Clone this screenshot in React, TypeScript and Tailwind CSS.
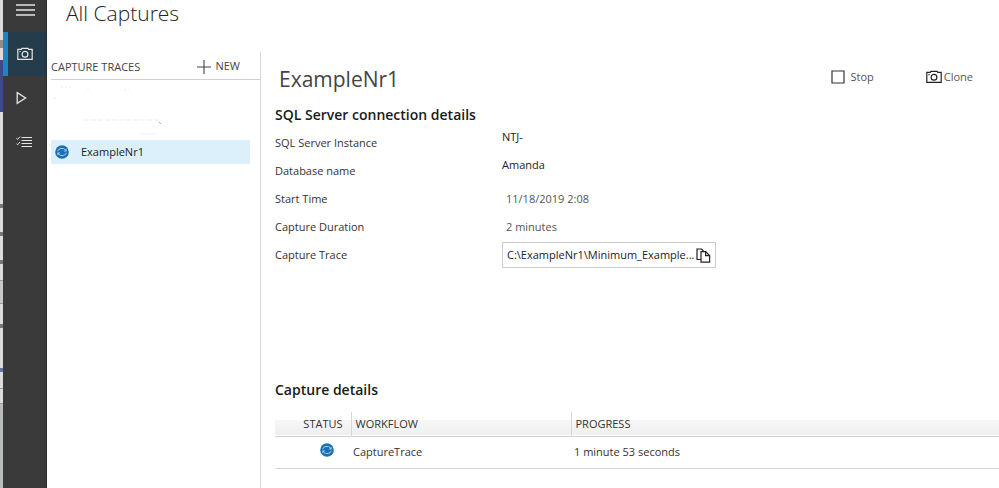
import React from "react";

const CameraIcon = ({ className }: { className?: string }) => (
  <svg viewBox="0 0 16 14" className={className} fill="none" stroke="currentColor" strokeWidth="1.2" aria-hidden="true">
    <path d="M0.8 2.4H4.2L5 1.3H11L11.8 2.4H15.2V12.4H0.8Z" />
    <circle cx="8" cy="7.3" r="2.9" />
    <path d="M2.4 4.6H3.6" />
  </svg>
);

const SyncIcon = ({ className }: { className?: string }) => (
  <svg viewBox="0 0 14 14" className={className} fill="none" aria-hidden="true">
    <circle cx="7" cy="7" r="6.8" fill="#1b6fb3" />
    <g stroke="#a3cdea" strokeWidth="1">
      <path d="M2.6 6.2A4.5 3.9 0 0 1 10.4 4.8" />
      <path d="M11.4 7.8A4.5 3.9 0 0 1 3.6 9.2" />
    </g>
    <path d="M11.6 3.6V6.4H8.6Z" fill="#a3cdea" />
    <path d="M2.4 10.4V7.6H5.4Z" fill="#a3cdea" />
  </svg>
);

const details = [
  { label: "SQL Server Instance", value: "NTJ-", style: "pb-3 text-[#222]" },
  { label: "Database name", value: "Amanda", style: "pb-3 text-[#222]" },
  { label: "Start Time", value: "11/18/2019 2:08", style: "pl-1 text-[#555]" },
  { label: "Capture Duration", value: "2 minutes", style: "pl-1 text-[#555]" },
];

// Sliver of the window behind this one
const BackgroundEdge = () => (
  <div className="flex w-[3px] shrink-0 flex-col bg-[#dcdcdc]" aria-hidden="true">
    <div className="h-10" />
    <div className="h-2 bg-[#8a8f94]" />
    <div className="h-3" />
    <div className="h-[52px] bg-[#3c4a8c]" />
    <div className="h-[92px]" />
    <div className="h-1 bg-[#777]" />
    <div className="h-6" />
    <div className="h-1 bg-[#777]" />
    <div className="h-6" />
    <div className="h-1 bg-[#777]" />
    <div className="h-4" />
    <div className="h-6 border-y border-[#999] bg-[#c8c8c8]" />
    <div className="h-5" />
    <div className="h-1 bg-[#777]" />
    <div className="h-10" />
    <div className="h-1 bg-[#6b76a0]" />
    <div className="h-4" />
    <div className="h-4 border-y border-[#999]" />
    <div className="grow bg-[#b9bcbc]" />
  </div>
);

const Sidebar = () => (
  <nav className="flex w-11 shrink-0 flex-col border-r border-[#2b2b2b] bg-[#3a3a3a] text-[#e4e4e4]">
    <button aria-label="Menu" className="h-8 pl-[13px]">
      <svg viewBox="0 0 19 12" className="mb-3 h-3 w-[19px]" stroke="currentColor" strokeWidth="1.4" aria-hidden="true">
        <path d="M0 1H19M0 6H19M0 11H19" />
      </svg>
    </button>
    <button aria-label="Captures" className="h-11 border-l-[5px] border-[#1f84c6] bg-[#243c4c] pl-[9px]">
      <CameraIcon className="h-[14px] w-4" />
    </button>
    <button aria-label="Replays" className="h-11 pl-[13px]">
      <svg viewBox="0 0 11 14" className="h-[14px] w-[11px]" fill="none" stroke="currentColor" strokeWidth="1.3" aria-hidden="true">
        <path d="M1.2 1.6L9.6 7L1.2 12.4Z" />
      </svg>
    </button>
    <button aria-label="Analysis reports" className="h-11 pl-[13px]">
      <svg viewBox="0 0 16 12" className="h-3 w-4" fill="none" stroke="currentColor" aria-hidden="true">
        <path d="M5.5 1.5H16M5.5 4.5H16M5.5 7.5H16M5.5 10.5H16" strokeWidth="1.1" />
        <path d="M0.4 2.2L1.6 3.4L4 0.6M0.4 7.6L1.6 8.8L4 6" strokeWidth="1" />
      </svg>
    </button>
  </nav>
);

const TraceList = () => (
  <aside className="w-[214px] shrink-0 border-r border-[#d8d8d8] pl-1">
    <div className="flex h-7 items-center justify-between border-b border-[#d0d0d0] pr-5 text-[11px] text-[#444]">
      <h2 className="pt-1">CAPTURE TRACES</h2>
      <button className="flex items-center gap-1 pt-[2px]">
        <svg viewBox="0 0 14 14" className="size-[14px]" stroke="currentColor" strokeWidth="1.1" aria-hidden="true">
          <path d="M7 0V14M0 7H14" />
        </svg>
        NEW
      </button>
    </div>
    <svg viewBox="0 0 200 60" className="h-[60px] w-[200px]" fill="none" stroke="#ececec" aria-hidden="true">
      <path d="M10 7H20M3 18H8M36 10H38M73 10H78" strokeDasharray="2 2" />
      <path d="M33 40H108" strokeDasharray="5 2" />
      <path d="M108 42L110 44" stroke="#aaa" />
      <path d="M90 54H104" stroke="#f3f3f3" />
    </svg>
    <div className="pr-[10px]">
      <button className="flex h-6 w-full items-center gap-3 bg-[#dbf0fa] pl-1 text-[11px] text-[#222]">
        <SyncIcon className="size-[14px]" />
        ExampleNr1
      </button>
    </div>
  </aside>
);

const ConnectionDetails = () => (
  <section>
    <h3 className="text-sm font-semibold text-[#1a1a1a]">SQL Server connection details</h3>
    <dl className="mt-1 text-[11px] text-[#333]">
      {details.map((item) => (
        <div key={item.label} className="flex h-7 items-center">
          <dt className="w-[227px] shrink-0">{item.label}</dt>
          <dd className={item.style}>{item.value}</dd>
        </div>
      ))}
    </dl>
    <div className="flex h-7 items-center text-[11px] text-[#333]">
      <label htmlFor="trace" className="w-[227px] shrink-0">
        Capture Trace
      </label>
      <div className="flex h-[26px] w-[214px] items-center border border-[#ccc] pr-1 pl-1">
        <input
          id="trace"
          readOnly
          defaultValue="C:\ExampleNr1\Minimum_Example..."
          className="min-w-0 grow bg-transparent text-[#222] outline-none"
        />
        <button aria-label="Copy path">
          <svg viewBox="0 0 15 15" className="size-[15px]" fill="none" stroke="#222" strokeWidth="1.2" aria-hidden="true">
            <path d="M5 11.5H1V1H5.5L7.5 3" />
            <path d="M5 3.6H9.6L13.6 7.6V14.2H5Z" />
            <path d="M9.6 3.6V7.6H13.6" />
          </svg>
        </button>
      </div>
    </div>
  </section>
);

const CaptureDetails = () => (
  <section className="mt-[111px]">
    <h3 className="text-sm font-semibold text-[#1a1a1a]">Capture details</h3>
    <table className="mt-3 w-full table-fixed border-collapse text-left text-[11px] text-[#333]">
      <thead>
        <tr className="h-6 border-b border-[#d0d0d0] bg-linear-to-b from-white from-35% via-[#f7f7f7] via-36% to-[#efefef]">
          <th className="w-[76px] border-r border-[#d8d8d8] pr-2 text-right font-normal">STATUS</th>
          <th className="w-[220px] border-r border-[#d8d8d8] pl-1 font-normal">WORKFLOW</th>
          <th className="pl-1 font-normal">PROGRESS</th>
        </tr>
      </thead>
      <tbody>
        <tr className="h-8 border-b border-[#d8d8d8]">
          <td className="pb-1 pl-[45px]">
            <SyncIcon className="size-[14px]" />
          </td>
          <td className="pl-[2px]">CaptureTrace</td>
          <td className="pl-[3px]">1 minute 53 seconds</td>
        </tr>
      </tbody>
    </table>
  </section>
);

const App: React.FC = () => {
  return (
    <div className="flex min-h-screen bg-white font-['Open_Sans',sans-serif]">
      <BackgroundEdge />
      <Sidebar />
      <div className="flex min-w-0 grow flex-col">
        <h1 className="h-[52px] pl-[19px] text-[21px] leading-[26px] font-light text-[#222]">All Captures</h1>
        <div className="flex grow">
          <TraceList />
          <main className="min-w-0 grow pt-px pl-[14px]">
            <div className="flex h-[52px] items-center pr-[26px] text-[#444]">
              <h2 className="grow pl-1 text-[21px] leading-7">ExampleNr1</h2>
              <div className="flex gap-[52px] pb-1 text-[11px] text-[#555]">
                <button className="flex items-center gap-[5px]">
                  <svg viewBox="0 0 14 14" className="size-[14px]" fill="none" stroke="#333" strokeWidth="1.2" aria-hidden="true">
                    <path d="M1 1H13V13H1Z" />
                  </svg>
                  Stop
                </button>
                <button className="flex items-center gap-[2px]">
                  <CameraIcon className="h-[14px] w-4 text-[#222]" />
                  Clone
                </button>
              </div>
            </div>
            <ConnectionDetails />
            <CaptureDetails />
          </main>
        </div>
      </div>
    </div>
  );
};

export default App;
